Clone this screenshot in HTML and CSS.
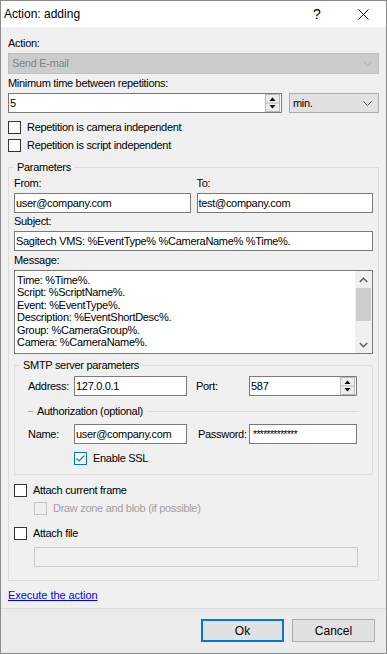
FILE: index.html
```html
<!DOCTYPE html>
<html>
  <head>
    <title>Action: adding</title>
    <link rel="stylesheet" href="styles.css">
  </head>
  <body>
    <div class="window">
      <div class="titlebar">
        <span class="title">Action: adding</span>
        <span class="caption-btn help">?</span>
        <span class="caption-btn close">
          <svg width="11" height="11" viewBox="0 0 11 11"><path d="M0.5 0.5L10.5 10.5M10.5 0.5L0.5 10.5" stroke="#000" stroke-width="1" fill="none"/></svg>
        </span>
      </div>

      <div class="content">
        <div class="lbl">Action:</div>
        <div class="combo disabled">
          <span class="combo-text">Send E-mail</span>
          <svg class="chev" width="9" height="5" viewBox="0 0 9 5"><path d="M0.5 0.5L4.5 4.5L8.5 0.5" stroke="#b0b0b0" fill="none"/></svg>
        </div>

        <div class="lbl gap3">Minimum time between repetitions:</div>
        <div class="interval-row">
          <div class="textbox spin-box">
            <span class="value">5</span>
            <svg class="spinner" width="15" height="18" viewBox="0 0 15 18">
              <rect x="0.5" y="0.5" width="14" height="17" fill="#ececec" stroke="#b9b9b9"/>
              <line x1="1" y1="9" x2="14" y2="9" stroke="#b9b9b9"/>
              <path d="M4.5 7h6l-3-3.5z" fill="#000"/>
              <path d="M4.5 11h6l-3 3.5z" fill="#000"/>
            </svg>
          </div>
          <div class="combo unit">
            <span class="combo-text">min.</span>
            <svg class="chev" width="9" height="5" viewBox="0 0 9 5"><path d="M0.5 0.5L4.5 4.5L8.5 0.5" stroke="#555" fill="none"/></svg>
          </div>
        </div>

        <div class="check rep-first"><span class="box"></span>Repetition is camera independent</div>
        <div class="check rep-second"><span class="box"></span>Repetition is script independent</div>

        <fieldset class="group params">
          <legend>Parameters</legend>

          <div class="addr-row">
            <div class="field">
              <div class="lbl">From:</div>
              <div class="textbox gap3">user@company.com</div>
            </div>
            <div class="field">
              <div class="lbl">To:</div>
              <div class="textbox gap3">test@company.com</div>
            </div>
          </div>

          <div class="lbl gap2">Subject:</div>
          <div class="textbox gap3">Sagitech VMS: %EventType% %CameraName% %Time%.</div>

          <div class="lbl gap3">Message:</div>
          <div class="memo gap3">
            <div class="memo-text">
              <div>Time: %Time%.</div>
              <div>Script: %ScriptName%.</div>
              <div>Event: %EventType%.</div>
              <div>Description: %EventShortDesc%.</div>
              <div>Group: %CameraGroup%.</div>
              <div>Camera: %CameraName%.</div>
            </div>
            <div class="vscroll">
              <div class="sb-btn">
                <svg width="9" height="6" viewBox="0 0 9 6"><path d="M0.8 5L4.5 1.3L8.2 5" stroke="#606060" stroke-width="1.6" fill="none"/></svg>
              </div>
              <div class="sb-thumb"></div>
              <div class="sb-track"></div>
              <div class="sb-btn">
                <svg width="9" height="6" viewBox="0 0 9 6"><path d="M0.8 1L4.5 4.7L8.2 1" stroke="#606060" stroke-width="1.6" fill="none"/></svg>
              </div>
            </div>
          </div>

          <fieldset class="group smtp">
            <legend>SMTP server parameters</legend>
            <div class="smtp-grid">
              <span>Address:</span>
              <div class="textbox">127.0.0.1</div>
              <span class="second-lbl">Port:</span>
              <div class="textbox spin-box">
                <span class="value">587</span>
                <svg class="spinner" width="15" height="18" viewBox="0 0 15 18">
                  <rect x="0.5" y="0.5" width="14" height="17" fill="#ececec" stroke="#b9b9b9"/>
                  <line x1="1" y1="9" x2="14" y2="9" stroke="#b9b9b9"/>
                  <path d="M4.5 7h6l-3-3.5z" fill="#000"/>
                  <path d="M4.5 11h6l-3 3.5z" fill="#000"/>
                </svg>
              </div>
            </div>

            <div class="auth">
              <span class="dash"></span>
              <span class="auth-text">Authorization (optional)</span>
              <span class="rule"></span>
            </div>

            <div class="smtp-grid name-row">
              <span>Name:</span>
              <div class="textbox">user@company.com</div>
              <span class="second-lbl pwd">Password:</span>
              <div class="textbox pwd-box">*************</div>
            </div>

            <div class="check ssl">
              <span class="box checked">
                <svg width="11" height="11" viewBox="0 0 11 11"><path d="M1.5 5.5L4 8L9.5 2.5" stroke="#0078d7" stroke-width="1.1" fill="none"/></svg>
              </span>
              Enable SSL
            </div>
          </fieldset>

          <div class="check frame"><span class="box"></span>Attach current frame</div>
          <div class="check sub disabled"><span class="box"></span>Draw zone and blob (if possible)</div>
          <div class="check attach"><span class="box"></span>Attach file</div>
          <div class="textbox disabled file"></div>
        </fieldset>

        <a class="exec" href="#">Execute the action</a>
      </div>

      <div class="footer">
        <button class="btn default">Ok</button>
        <button class="btn">Cancel</button>
      </div>
    </div>
  </body>
</html>
```

FILE: styles.css
```css
* {
  box-sizing: border-box;
}

body {
  margin: 0;
  font-family: "Liberation Sans", Arial, sans-serif;
  font-size: 11px;
  line-height: 13px;
  letter-spacing: -0.3px;
  color: #000;
  background: #fff;
}

.window {
  width: 387px;
  height: 654px;
  border: 1px solid #8a8a8a;
  background: #f0f0f0;
  display: flex;
  flex-direction: column;
}

/* title bar */
.titlebar {
  height: 26px;
  background: #fff;
  display: flex;
  align-items: center;
  padding-left: 3px;
  font-size: 12px;
  letter-spacing: 0;
}

.title {
  flex: 1;
}

.caption-btn {
  width: 46px;
  height: 26px;
  display: flex;
  align-items: center;
  justify-content: center;
}

.help {
  font-size: 14px;
}

/* main area */
.content {
  flex: 1;
  padding: 10px 7px 0 7px;
}

.lbl {
  height: 13px;
}

.gap2 {
  margin-top: 2px;
}

.gap3 {
  margin-top: 3px;
}

.combo {
  height: 21px;
  margin-top: 3px;
  display: flex;
  align-items: center;
  padding: 0 6px 0 3px;
  border: 1px solid #adadad;
  background: #e1e1e1;
}

.combo-text {
  flex: 1;
}

.combo.disabled {
  background: #cccccc;
  border-color: #bfbfbf;
  color: #838383;
}

.interval-row {
  display: flex;
  gap: 7px;
  margin-top: 3px;
}

.interval-row .spin-box {
  width: 274px;
}

.combo.unit {
  width: 90px;
  height: 20px;
  margin-top: 0;
}

.textbox {
  height: 20px;
  border: 1px solid #7a7a7a;
  background: #fff;
  padding: 0 1px;
  display: flex;
  align-items: center;
  white-space: nowrap;
  overflow: hidden;
}

.spin-box .value {
  flex: 1;
}

.spinner {
  display: block;
}

.textbox.disabled {
  border-color: #cccccc;
  background: #f0f0f0;
}

/* checkboxes */
.check {
  display: flex;
  align-items: center;
  gap: 6px;
  height: 13px;
}

.box {
  width: 13px;
  height: 13px;
  border: 1px solid #333;
  background: #fff;
  display: flex;
  align-items: center;
  justify-content: center;
}

.box.checked {
  border-color: #0078d7;
}

.check.disabled {
  color: #a0a0a0;
}

.check.disabled .box {
  border-color: #c4c4c4;
  background: #f0f0f0;
}

.rep-first {
  margin-top: 8px;
}

.rep-second {
  margin-top: 5px;
}

/* group boxes */
.group {
  margin: 0;
  border: 1px solid #dcdcdc;
  min-width: 0;
}

.group legend {
  padding: 0 3px;
  line-height: 13px;
}

.params {
  margin-top: 9px;
  padding: 3px 5px 13px 5px;
}

.addr-row {
  display: grid;
  grid-template-columns: 1fr 1fr;
  gap: 6px;
}

.memo {
  height: 84px;
  border: 1px solid #7a7a7a;
  background: #fff;
  display: flex;
}

.memo-text {
  flex: 1;
  padding: 3px 2px;
  line-height: 12.4px;
}

.vscroll {
  width: 17px;
  background: #f0f0f0;
  display: flex;
  flex-direction: column;
}

.sb-btn {
  height: 17px;
  display: flex;
  align-items: center;
  justify-content: center;
}

.sb-thumb {
  height: 33px;
  margin: 0 1px;
  background: #cdcdcd;
}

.sb-track {
  flex: 1;
}

.smtp {
  margin-top: 5px;
  padding: 4px 5px 9px 5px;
}

.smtp-grid {
  display: grid;
  grid-template-columns: 46px 113px 62px 108px;
  align-items: center;
  padding-left: 8px;
}

.second-lbl {
  padding-left: 9px;
}

.second-lbl.pwd {
  padding-left: 11px;
}

.name-row {
  margin-top: 6px;
}

.pwd-box {
  align-items: flex-start;
  padding: 3px 0 0 3px;
  font-size: 10px;
  letter-spacing: -0.5px;
}

.auth {
  display: flex;
  align-items: center;
  margin-top: 9px;
  padding-left: 8px;
}

.dash {
  width: 5px;
  border-top: 1px solid #a0a0a0;
}

.auth-text {
  padding: 0 4px;
}

.rule {
  flex: 1;
  margin-right: 8px;
  border-top: 1px solid #dcdcdc;
}

.ssl {
  margin-top: 8px;
  margin-left: 54px;
}

.frame {
  margin-top: 9px;
}

.check.sub {
  margin-top: 5px;
  margin-left: 20px;
}

.attach {
  margin-top: 12px;
}

.file {
  width: 324px;
  margin-top: 7px;
  margin-left: 20px;
}

.exec {
  display: inline-block;
  margin-top: 8px;
  color: #0000ff;
  text-decoration: underline;
  letter-spacing: -0.05px;
}

/* buttons */
.footer {
  height: 45px;
  border-top: 1px solid #dadada;
  background: #ebebeb;
  display: flex;
  justify-content: flex-end;
  align-items: flex-start;
  gap: 8px;
  padding: 10px 11px 0 0;
}

.btn {
  width: 83px;
  height: 23px;
  border: 1px solid #adadad;
  background: #e1e1e1;
  font-family: "Liberation Sans", Arial, sans-serif;
  font-size: 12px;
  letter-spacing: 0;
  color: #000;
  padding: 0;
}

.btn.default {
  border: 2px solid #0078d7;
}
```
